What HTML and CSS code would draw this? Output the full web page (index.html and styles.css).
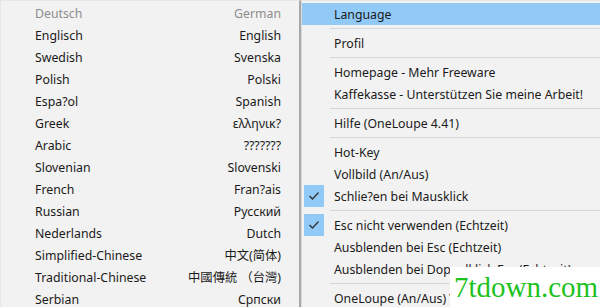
FILE: index.html
```html
<!DOCTYPE html>
<html lang="de">
<head>
    <meta charset="UTF-8">
    <meta name="viewport" content="width=device-width, initial-scale=1.0">
    <title>OneLoupe Menü</title>
    <link rel="stylesheet" href="styles.css">
</head>
<body>
    <div class="screen">
        <div class="menu lang">
            <div class="row disabled"><span>Deutsch</span><span>German</span></div>
            <div class="row"><span>Englisch</span><span>English</span></div>
            <div class="row"><span>Swedish</span><span>Svenska</span></div>
            <div class="row"><span>Polish</span><span>Polski</span></div>
            <div class="row"><span>Espa?ol</span><span>Spanish</span></div>
            <div class="row"><span>Greek</span><span>ελληνικ?</span></div>
            <div class="row"><span>Arabic</span><span>???????</span></div>
            <div class="row"><span>Slovenian</span><span>Slovenski</span></div>
            <div class="row"><span>French</span><span>Fran?ais</span></div>
            <div class="row"><span>Russian</span><span>Русский</span></div>
            <div class="row"><span>Nederlands</span><span>Dutch</span></div>
            <div class="row"><span>Simplified-Chinese</span><span>中文(简体)</span></div>
            <div class="row"><span>Traditional-Chinese</span><span>中國傳統 （台灣)</span></div>
            <div class="row"><span>Serbian</span><span>Српски</span></div>
        </div>
        <div class="menu main">
            <div class="item active"><i class="gut"></i>Language</div>
            <div class="sep"></div>
            <div class="item"><i class="gut"></i>Profil</div>
            <div class="sep"></div>
            <div class="item"><i class="gut"></i>Homepage - Mehr Freeware</div>
            <div class="item"><i class="gut"></i>Kaffekasse - Unterstützen Sie meine Arbeit!</div>
            <div class="sep"></div>
            <div class="item"><i class="gut"></i>Hilfe (OneLoupe 4.41)</div>
            <div class="sep"></div>
            <div class="item"><i class="gut"></i>Hot-Key</div>
            <div class="item"><i class="gut"></i>Vollbild (An/Aus)</div>
            <div class="item"><i class="gut checked"><svg width="12" height="10" viewBox="0 0 12 10"><polyline points="1.5,5 4.5,8 10.5,1.5" fill="none" stroke="#333" stroke-width="1.3"/></svg></i>Schlie?en bei Mausklick</div>
            <div class="sep"></div>
            <div class="item"><i class="gut checked"><svg width="12" height="10" viewBox="0 0 12 10"><polyline points="1.5,5 4.5,8 10.5,1.5" fill="none" stroke="#333" stroke-width="1.3"/></svg></i>Esc nicht verwenden (Echtzeit)</div>
            <div class="item"><i class="gut"></i>Ausblenden bei Esc (Echtzeit)</div>
            <div class="item"><i class="gut"></i>Ausblenden bei Doppelklick Esc (Echtzeit)</div>
            <div class="sep"></div>
            <div class="item"><i class="gut"></i>OneLoupe (An/Aus) Vollbild</div>
        </div>
        <div class="mark">7tdown.com</div>
    </div>
</body>
</html>
```

FILE: styles.css
```css
body {
    margin: 0;
    font-family: "Noto Sans", "Noto Sans CJK SC", sans-serif;
    font-size: 12.3px;
    color: #1a1a1a;
    background: #f2f2f2;
    overflow: hidden;
}
.screen {
    position: relative;
    display: flex;
    height: 307px;
    overflow: hidden;
}
.menu {
    box-sizing: border-box;
    background: #f2f2f2;
    padding-top: 2px;
}
.lang {
    width: 301px;
    flex: none;
    border-top: 1px solid #e6e6e6;
    border-left: 1px solid #e6e6e6;
    border-right: 2px solid #a8a8a8;
    padding-left: 34px;
    padding-right: 18px;
}
.main {
    flex: 1;
    border-top: 1px solid #e6e6e6;
    border-left: 1px solid #dcdcdc;
    padding-top: 2px;
}
.row {
    display: flex;
    justify-content: space-between;
    height: 22px;
    line-height: 21px;
    white-space: nowrap;
}
.row.disabled {
    color: #8d8d8d;
}
.item {
    display: flex;
    align-items: center;
    height: 22px;
    line-height: 21px;
    white-space: nowrap;
}
.item.active {
    background: #91c9f7;
}
.gut {
    width: 20px;
    height: 22px;
    margin: 0 10px 0 2px;
    flex: none;
    display: flex;
    align-items: center;
    justify-content: center;
}
.gut.checked {
    background: #91c9f7;
}
.sep {
    height: 1px;
    background: #d7d7d7;
    margin: 3px 0 3px 28px;
}
.mark {
    position: absolute;
    left: 450px;
    top: 267px;
    width: 150px;
    height: 40px;
    background: #fff;
    color: #1ec21e;
    font-family: "Liberation Serif", serif;
    font-size: 29px;
    line-height: 40px;
    padding-left: 4px;
    box-sizing: border-box;
    white-space: nowrap;
}
```
